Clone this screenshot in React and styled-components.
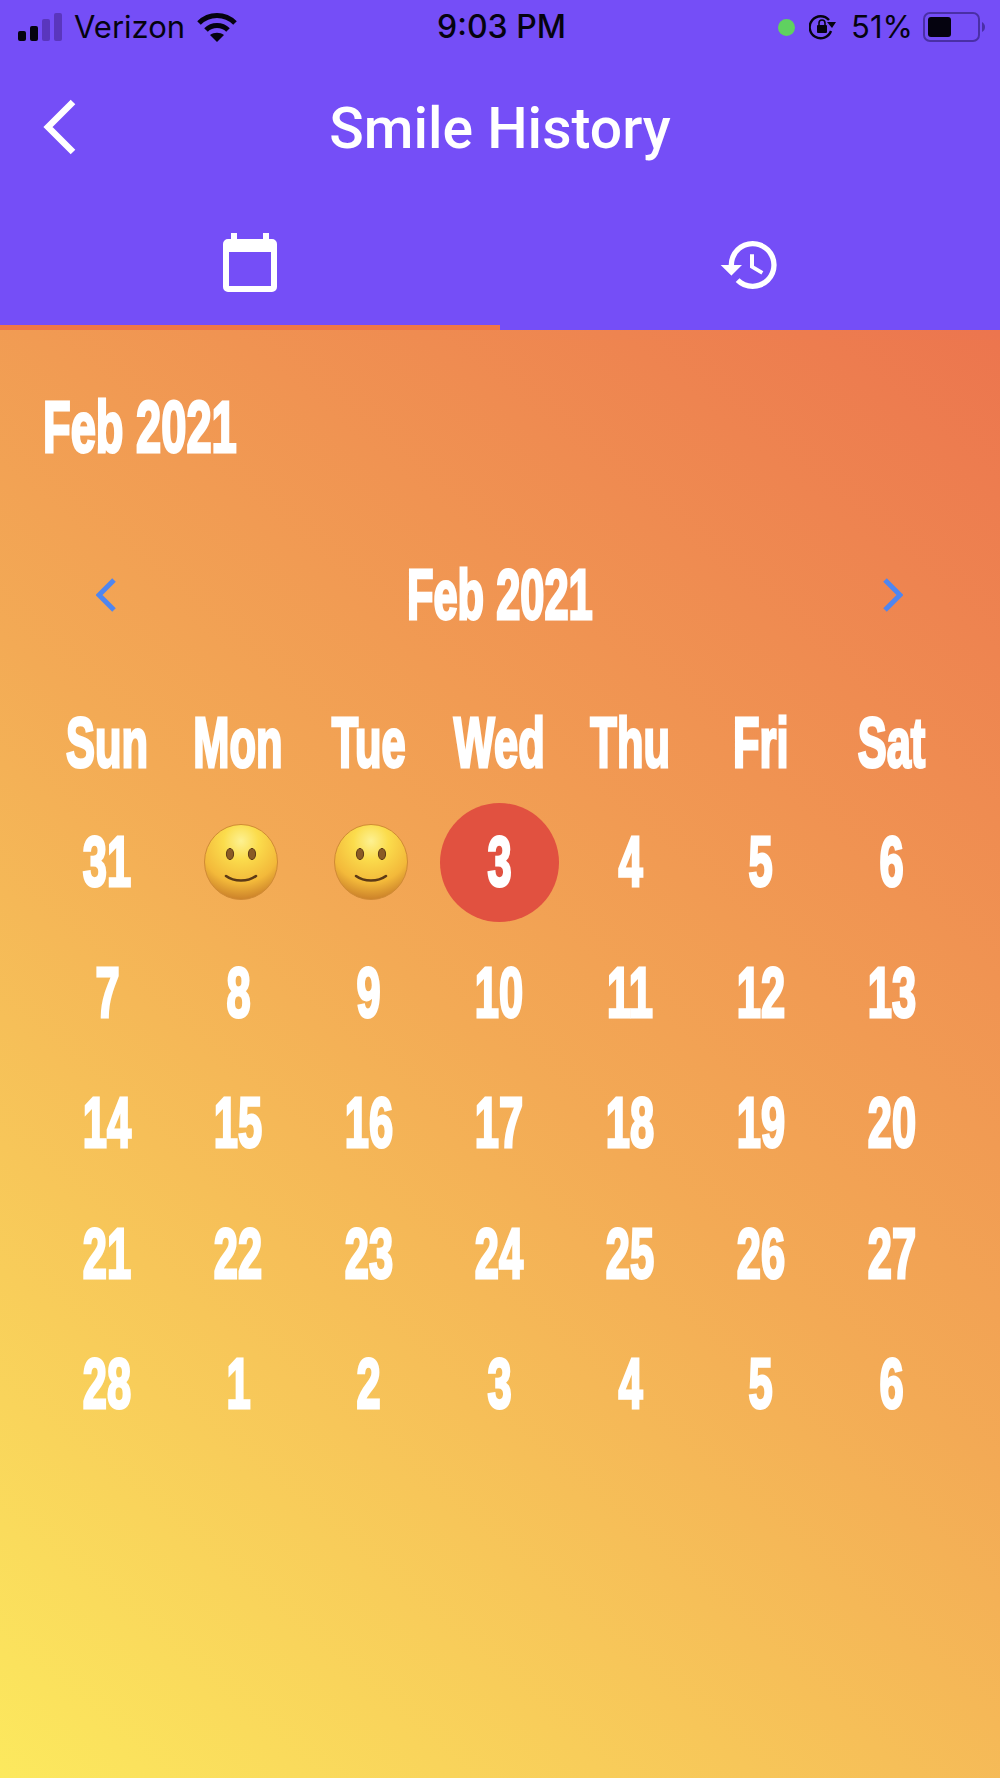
import React from 'react';
import styled, { createGlobalStyle } from 'styled-components';

const Global = createGlobalStyle`
  html, body { margin: 0; padding: 0; }
  body { font-family: "Inter", "Liberation Sans", sans-serif; }
`;
const display = `
  font-family: "Liberation Sans", sans-serif;
  font-weight: 700;
  color: #fff;
  -webkit-text-stroke: 3px #fff;
`;
const Page = styled.div`
  width: 1000px; height: 1778px; display: flex; flex-direction: column; overflow: hidden;
`;
const Top = styled.div`background: #754ef7;`;
const Status = styled.div`
  height: 54px; display: grid; grid-template-columns: 1fr auto 1fr; align-items: center;
  padding: 0 15px 0 18px; color: #05030f; font-size: 31px; line-height: 54px;
`;
const StatusLeft = styled.div`display: flex; align-items: center; gap: 12px;`;
const StatusRight = styled.div`display: flex; align-items: center; justify-content: flex-end;`;
const Clock = styled.div`font-weight: 500; font-size: 32px;`;
const Dot = styled.span`width: 17px; height: 17px; border-radius: 50%; background: #5fd160; margin-right: 14px;`;
const Pct = styled.span`margin: 0 10px 0 14px;`;
const Header = styled.div`
  height: 146px; display: grid; grid-template-columns: 1fr auto 1fr; align-items: center; padding: 0 43px;
`;
const Title = styled.div`
  font-family: Roboto, "Liberation Sans", sans-serif; font-weight: 500; font-size: 57px; color: #fff; line-height: 64px;
  margin-top: 4px;
`;
const Tabs = styled.div`display: grid; grid-template-columns: 1fr 1fr; height: 130px;`;
const Tab = styled.div`
  display: flex; align-items: center; justify-content: center; height: 130px; box-sizing: border-box;
  ${p => p.$active ? 'border-bottom: 5px solid #f07645;' : ''}
`;
const Body = styled.div`
  flex: 1; padding: 0 44px 0 42px;
  background: linear-gradient(40deg, #fce95e 0%, #f3aa55 50%, #ec754e 100%);
`;
const Squeeze = styled.span`
  display: inline-block; transform: scaleX(.62); white-space: nowrap;
`;
const Heading = styled.div`
  ${display} font-size: 73px; line-height: 70px; margin: 62px 0 0 1px;
  ${Squeeze} { transform-origin: left center; }
`;
const Nav = styled.div`
  display: flex; align-items: center; justify-content: space-between; height: 70px; margin-top: 98px; padding: 0 53px 0 54px;
`;
const NavTitle = styled.div`${display} font-size: 70px; line-height: 70px;`;
const Grid = styled.div`
  display: grid; grid-template-columns: repeat(7, 130.7px); grid-template-rows: 108px repeat(5, 130.5px); margin-top: 59px;
`;
const Cell = styled.div`
  ${display} font-size: 70px; line-height: 70px; display: flex; align-items: center; justify-content: center;
`;
const SmileWrap = styled.div`display: flex; margin-left: 5px;`;
const Today = styled.div`
  width: 119px; height: 119px; border-radius: 50%; background: #e15140;
  display: flex; align-items: center; justify-content: center;
`;

const Signal = () => (
  <svg width="44" height="28" viewBox="0 0 44 28">
    <rect x="0" y="18" width="8" height="10" rx="2" fill="#05030f" />
    <rect x="12" y="13" width="8" height="15" rx="2" fill="#05030f" />
    <rect x="24" y="6" width="8" height="22" rx="2" fill="#5a36bd" />
    <rect x="36" y="0" width="8" height="28" rx="2" fill="#5a36bd" />
  </svg>
);
const Wifi = () => (
  <svg width="40" height="29" viewBox="0 0 40 29" fill="none" stroke="#05030f" strokeWidth="5">
    <path d="M2 10C12 0 28 0 38 10" />
    <path d="M9 17c6-6 16-6 22 0" />
    <path d="M20 29l-7-7c4-3 10-3 14 0z" fill="#05030f" stroke="none" />
  </svg>
);
const RotLock = () => (
  <svg width="28" height="26" viewBox="0 0 28 26" fill="none">
    <path d="M20 6A11 11 0 1 0 22 17" stroke="#05030f" strokeWidth="2.4" />
    <path d="M18 8l9 0-4 6z" fill="#05030f" />
    <rect x="8" y="11" width="10" height="8" rx="1" fill="#05030f" />
    <path d="M10 11V9a3 3 0 0 1 6 0v2" stroke="#05030f" strokeWidth="1.6" />
  </svg>
);
const Battery = () => (
  <svg width="62" height="30" viewBox="0 0 62 30">
    <rect x="1" y="1" width="55" height="28" rx="6" fill="none" stroke="#4a2fa6" strokeWidth="2" />
    <rect x="5" y="5" width="23" height="20" rx="3" fill="#05030f" />
    <path d="M59 10c2 1 3 3 3 5s-1 4-3 5z" fill="#4a2fa6" />
  </svg>
);
const Back = () => (
  <svg width="34" height="56" viewBox="0 0 34 56" fill="none">
    <path d="M30 3L5 28l25 25" stroke="#fff" strokeWidth="6.5" />
  </svg>
);
const CalIcon = () => (
  <svg width="54" height="59" viewBox="0 0 54 59">
    <path fillRule="evenodd" fill="#fff" d="M8 6V0h6v6h26V0h6v6h3a5 5 0 0 1 5 5v43a5 5 0 0 1-5 5H5a5 5 0 0 1-5-5V11a5 5 0 0 1 5-5zM6 19v34h42V19z" />
  </svg>
);
const HistoryIcon = () => (
  <svg width="64" height="64" viewBox="0 0 24 24" fill="#fff">
    <path d="M13 3a9 9 0 0 0-9 9H1l3.89 3.89.07.14L9 12H6c0-3.87 3.13-7 7-7s7 3.13 7 7-3.13 7-7 7c-1.93 0-3.68-.79-4.94-2.06l-1.42 1.42A8.954 8.954 0 0 0 13 21a9 9 0 0 0 0-18zm-1 5v5l4.28 2.54.72-1.21-3.5-2.08V8H12z" />
  </svg>
);
const Chevron = ({ right }) => (
  <svg width="20" height="34" viewBox="0 0 20 34" fill="none">
    <path d={right ? 'M2 2l15 15L2 32' : 'M18 2L3 17l15 15'} stroke="#4f86f0" strokeWidth="5" />
  </svg>
);
const Smile = ({ id }) => (
  <svg width="74" height="76" viewBox="0 0 74 76">
    <defs>
      <radialGradient id={id} cx="50%" cy="22%" r="80%">
        <stop offset="0%" stopColor="#fdf192" />
        <stop offset="30%" stopColor="#fbdc4c" />
        <stop offset="70%" stopColor="#f3b93a" />
        <stop offset="100%" stopColor="#c87c28" />
      </radialGradient>
    </defs>
    <ellipse cx="37" cy="38" rx="36.5" ry="37.5" fill={`url(#${id})`} stroke="#d08a34" strokeWidth="1" />
    <ellipse cx="26" cy="30" rx="3.6" ry="5.6" fill="#8a5a25" stroke="#5d3a16" strokeWidth="1" />
    <ellipse cx="48" cy="30" rx="3.6" ry="5.6" fill="#8a5a25" stroke="#5d3a16" strokeWidth="1" />
    <path d="M22 52c8 6 22 6 30 0" fill="none" stroke="#5d3a16" strokeWidth="2.6" strokeLinecap="round" />
  </svg>
);

const days = ['Sun', 'Mon', 'Tue', 'Wed', 'Thu', 'Fri', 'Sat'];
const dates = [31, 'smile', 'smile', 'today', 4, 5, 6, 7, 8, 9, 10, 11, 12, 13, 14, 15, 16, 17, 18, 19, 20, 21, 22, 23, 24, 25, 26, 27, 28, 1, 2, 3, 4, 5, 6];

export default function App() {
  return (
    <Page>
      <Global />
      <Top>
        <Status>
          <StatusLeft><Signal /><span>Verizon</span><Wifi /></StatusLeft>
          <Clock>9:03 PM</Clock>
          <StatusRight><Dot /><RotLock /><Pct>51%</Pct><Battery /></StatusRight>
        </Status>
        <Header>
          <Back />
          <Title>Smile History</Title>
        </Header>
        <Tabs>
          <Tab $active><CalIcon /></Tab>
          <Tab><HistoryIcon /></Tab>
        </Tabs>
      </Top>
      <Body>
        <Heading><Squeeze>Feb 2021</Squeeze></Heading>
        <Nav>
          <Chevron />
          <NavTitle><Squeeze>Feb 2021</Squeeze></NavTitle>
          <Chevron right />
        </Nav>
        <Grid>
          {days.map(d => <Cell key={d}><Squeeze>{d}</Squeeze></Cell>)}
          {dates.map((d, i) => (
            <Cell key={i}>
              {d === 'smile' ? <SmileWrap><Smile id={`s${i}`} /></SmileWrap> : d === 'today' ? <Today><Squeeze>3</Squeeze></Today> : <Squeeze>{d}</Squeeze>}
            </Cell>
          ))}
        </Grid>
      </Body>
    </Page>
  );
}
